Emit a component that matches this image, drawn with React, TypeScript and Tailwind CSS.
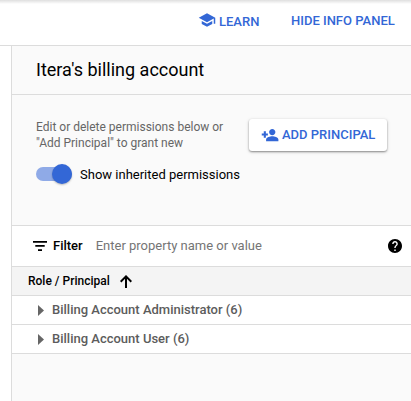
import React from "react";
import { MdHelp, MdSchool } from "react-icons/md";

const roles = ["Billing Account Administrator (6)", "Billing Account User (6)"];

function PersonAddIcon() {
  return (
    <svg className="size-[18px] shrink-0" viewBox="0 0 24 24" fill="currentColor">
      <path d="M15 12.3c2.3 0 4.2-1.9 4.2-4.2S17.300 3.900 15 3.900 10.800 5.800 10.800 8.100s1.900 4.200 4.200 4.200zM6.500 10V7H3.700v3H1v2.500h2.700v3h2.800v-3h2.700V10H6.500zM15 13.700c-2.700 0-8.200 1.400-8.200 4.200V20.200h16.400v-2.300c0-2.800-5.500-4.200-8.200-4.200z" />
    </svg>
  );
}

function FilterIcon() {
  return (
    <svg className="h-[10px] w-[14px] shrink-0" viewBox="0 0 14 10">
      <path d="M0 0H14V1.7H0ZM2.3 4.1H11.7V5.8H2.3ZM5 8.2H9V9.9H5Z" fill="#000" />
    </svg>
  );
}

function SortArrow() {
  return (
    <svg className="ml-[10px] h-[13px] w-3 shrink-0" viewBox="0 0 12 13">
      <path d="M6 13V1.5M0.7 6.7L6 1.4L11.3 6.7" fill="none" stroke="#000" strokeWidth="2" />
    </svg>
  );
}

function RoleRow({ label }: { label: string }) {
  return (
    <div className="flex h-[29px] items-center border-b border-[#dcdcdc] bg-white pl-[26px] text-[13px] font-medium text-[#5c5c5c]">
      <svg className="h-[11px] w-[6px] shrink-0" viewBox="0 0 6 11">
        <path d="M0 0L6 5.5L0 11Z" fill="#666" />
      </svg>
      <span className="ml-2 whitespace-nowrap">{label}</span>
    </div>
  );
}

export default function App() {
  return (
    <div className="flex h-[401px] w-[411px] flex-col overflow-hidden bg-white font-['Roboto',sans-serif] text-black">
      <header className="flex h-[46px] shrink-0 border-b border-[#dcdcdc] bg-gradient-to-b from-[#dfdfdf] to-white to-[4px] pl-[198px] text-[13px] leading-[18px] font-medium text-[#3367d6]">
        <a className="flex w-[93px] pt-[11px]">
          <MdSchool size={18} />
          <span className="ml-[3px] pt-[2px]">LEARN</span>
        </a>
        <a className="pt-[12px] whitespace-nowrap">HIDE INFO PANEL</a>
      </header>
      <main className="ml-[11px] flex flex-1 flex-col border-l border-[#dcdcdc] bg-[#fafafa]">
        <h1 className="flex h-[49px] shrink-0 items-center border-b border-[#dcdcdc] pb-[2px] pl-6 text-[18px]">
          Itera's billing account
        </h1>
        <section className="h-[130px] shrink-0 pt-6 pl-6">
          <div className="flex">
            <p className="w-[213px] text-[12px] leading-4 whitespace-nowrap text-[#666]">
              Edit or delete permissions below or
              <br />
              "Add Principal" to grant new
            </p>
            <button className="flex h-8 w-[138px] items-center rounded-[3px] bg-white pl-3 text-[13px] font-medium whitespace-nowrap text-[#3367d6] shadow-[0_1px_2px_rgba(0,0,0,0.4),0_1px_4px_rgba(0,0,0,0.12)]">
              <PersonAddIcon />
              <span className="ml-[3px]">ADD PRINCIPAL</span>
            </button>
          </div>
          <div className="mt-[13px] flex h-5 items-center">
            <div className="flex h-[14px] w-9 items-center justify-end rounded-full bg-[#8faae7]">
              <div className="size-5 shrink-0 rounded-full bg-[#3367d6] shadow-[0_1px_2px_rgba(0,0,0,0.25)]" />
            </div>
            <span className="ml-2 pt-[2px] text-[13px]">Show inherited permissions</span>
          </div>
        </section>
        <div className="flex h-[42px] shrink-0 items-center border-y border-[#dcdcdc] bg-white pr-[9px] pl-[21px] text-[13px]">
          <FilterIcon />
          <span className="ml-[6px] font-medium">Filter</span>
          <span className="ml-[13px] flex-1 text-[#757575]">Enter property name or value</span>
          <MdHelp size={14} viewBox="2 2 20 20" />
        </div>
        <div className="flex h-[29px] shrink-0 items-center border-b border-[#dcdcdc] bg-[#f4f4f4] pl-4 text-[12px] font-medium">
          Role / Principal
          <SortArrow />
        </div>
        {roles.map((label) => (
          <RoleRow key={label} label={label} />
        ))}
      </main>
    </div>
  );
}
